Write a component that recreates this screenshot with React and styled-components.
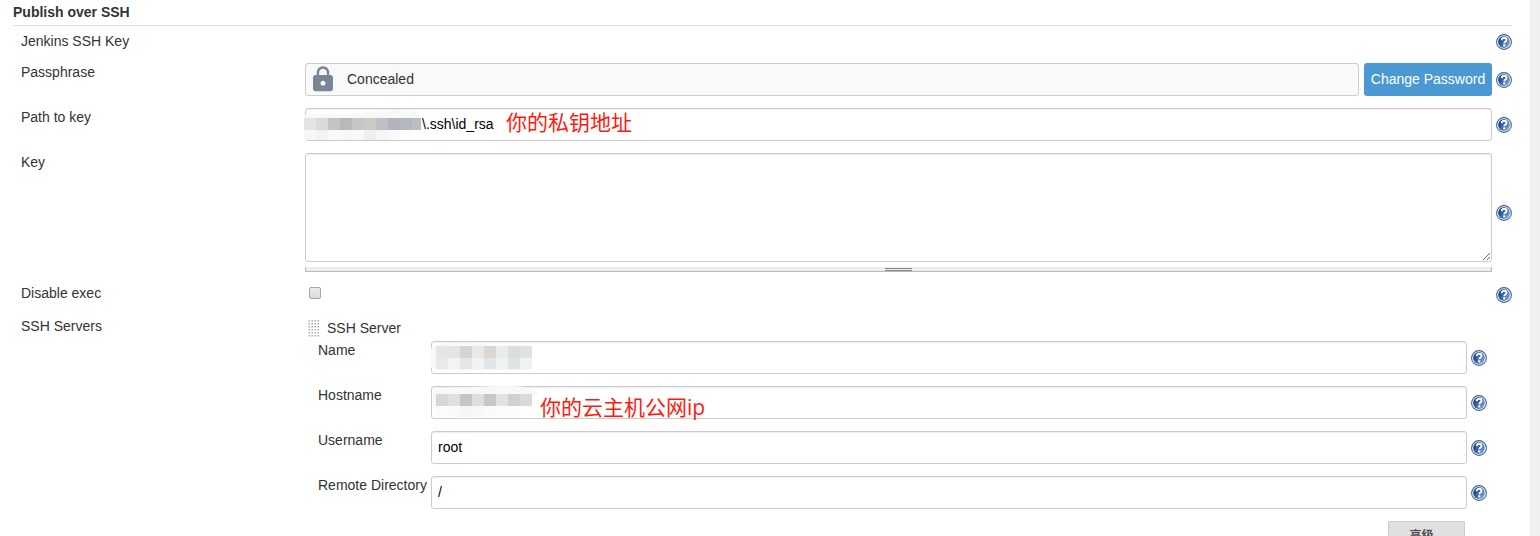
import React, { useState } from 'react'
import styled, { createGlobalStyle } from 'styled-components';

const pathCells = [
  ['#e4e4e4', '#dcdad9', '#c4c4c6', '#b9b9bc', '#c6c5c9', '#cbc9c8', '#bfc0c6', '#b4b3bd', '#b5b9bf', '#b9bfbf'],
  ['#f7f7f7', '#f3f3f3', '#fafafa', '#f8f8f8', '#f9f9f9', '#f0efee', '#f6f6f6', '#fafafa', '#fdfdfd', '#ffffff'],
];
const nameCells = [
  ['#e6e6e7', '#e4e4e5', '#d4d4d5', '#e9e9ea', '#dbd7d5', '#ebebeb', '#dadedf', '#e1e1e4'],
  ['#e9e9ea', '#f3f3f1', '#e6e6e7', '#f2f2f2', '#e3e4e5', '#f0f3f2', '#e0e3e3', '#f1f1f1'],
];
const hostCells = [
  ['#d7d7da', '#e0e0df', '#c8c5c6', '#dededf', '#c8c6c6', '#e2e2e3', '#ccd2d1', '#dadadc'],
  ['#fbfbfb', '#fafafa', '#f6f6f6', '#f8f8f8', '#fafafa', '#fbfbfb', '#fcfcfc', '#fefefe'],
];

function HelpIcon() {
  return (
    <svg width="16" height="16" viewBox="0 0 16 16" aria-hidden="true">
      <defs>
        <linearGradient id="helpFill" x1="0" y1="0.2" x2="1" y2="0.8">
          <stop offset="0.2" stopColor="#1f4a8a" />
          <stop offset="1" stopColor="#83a6d8" />
        </linearGradient>
      </defs>
      <circle cx="8" cy="8" r="7.4" fill="#fff" stroke="#3a62a0" strokeWidth="1.1" />
      <circle cx="8" cy="8" r="5.9" fill="url(#helpFill)" />
      <path d="M5.7 6.2C5.7 4.5 6.7 3.8 8.1 3.8s2.4 .8 2.4 2.1c0 1.6-2.2 1.7-2.2 3.4" fill="none" stroke="#fff" strokeWidth="1.9" />
      <rect x="7.2" y="10.3" width="2.1" height="2.1" fill="#fff" />
    </svg>
  )
}

function LockIcon() {
  return (
    <svg width="30" height="30" viewBox="0 0 24 24" fill="#778595" aria-hidden="true">
      <path d="M18 8h-1V6c0-2.76-2.24-5-5-5S7 3.24 7 6v2H6c-1.1 0-2 .9-2 2v9c0 1.1.9 2 2 2h12c1.1 0 2-.9 2-2v-9c0-1.1-.9-2-2-2zm-6 8.500c-1.1 0-2-.9-2-2s.9-2 2-2 2 .9 2 2-.9 2-2 2zm3.100-8.500H8.900V6c0-1.710 1.390-3.100 3.100-3.100 1.710 0 3.100 1.390 3.100 3.100v2z" />
    </svg>
  )
}

function DragHandle() {
  const dots = [];
  for (let y = 0; y < 6; y++) {
    for (let x = 0; x < 4; x++) {
      dots.push(
        <g key={`${x}-${y}`}>
          <rect x={x * 3} y={y * 3} width="2" height="2" fill="#dcdcdc" />
          <rect x={x * 3 + 1} y={y * 3} width="1" height="1" fill="#a8a8a8" />
        </g>
      );
    }
  }
  return <svg width="11" height="17" aria-hidden="true">{dots}</svg>
}

// blocks that hide a private value
function Mosaic({ cells, width, smudge, left = 5, top }) {
  return (
    <svg width={width} height="32" aria-hidden="true">
      <path d={smudge} fill="#f8f8f8" />
      {cells.map((row, y) => row.map((color, x) => (
        <rect key={`${x}-${y}`} x={left + x * 12} y={top + y * 12} width="12" height={y === 0 ? 12 : 11} fill={color} />
      )))}
    </svg>
  )
}

function Help({ topic }) {
  return (
    <HelpCell>
      <HelpButton type="button" aria-label={`Help for ${topic}`}><HelpIcon /></HelpButton>
    </HelpCell>
  )
}

export default function App() {
  const [path, setPath] = useState('\\.ssh\\id_rsa');
  const [key, setKey] = useState('');
  const [disableExec, setDisableExec] = useState(false);
  const [server, setServer] = useState({ name: '', hostname: '', username: 'root', directory: '/' });

  const changeServer = (e) => {
    setServer({ ...server, [e.target.name]: e.target.value });
  }

  return (
    <>
      <GlobalStyle />
      <Page>
        <SectionTitle>Publish over SSH</SectionTitle>
        <Form onSubmit={(e) => e.preventDefault()}>
          <Row>
            <Label as="span">Jenkins SSH Key</Label>
            <Control />
            <Help topic="Jenkins SSH Key" />
          </Row>

          <Row>
            <Label as="span">Passphrase</Label>
            <PasswordControl>
              <Concealed><LockIcon /><ConcealedText>Concealed</ConcealedText></Concealed>
              <ChangeButton type="button">Change Password</ChangeButton>
            </PasswordControl>
            <Help topic="Passphrase" />
          </Row>

          <Row>
            <Label htmlFor="path">Path to key</Label>
            <Control>
              <Input id="path" $indent={116} value={path} onChange={(e) => setPath(e.target.value)} />
              <Cover $left={-1}>
                <Mosaic cells={pathCells} width={117} left={0} top={10} smudge="M0 7Q36 6 66 4Q91 1 111 4Q117 6 117 12V22Q96 24 72 30H0Z" />
              </Cover>
              <Note $left={201}>你的私钥地址</Note>
            </Control>
            <Help topic="Path to key" />
          </Row>

          <Row>
            <Label htmlFor="key">Key</Label>
            <Control>
              <TextArea id="key" value={key} onChange={(e) => setKey(e.target.value)} />
              <ResizeBar><Grip /></ResizeBar>
            </Control>
            <Help topic="Key" />
          </Row>

          <Row $tall>
            <Label htmlFor="exec">Disable exec</Label>
            <Control>
              <Checkbox id="exec" type="checkbox" checked={disableExec} onChange={(e) => setDisableExec(e.target.checked)} />
            </Control>
            <Help topic="Disable exec" />
          </Row>

          <Row>
            <Label as="span">SSH Servers</Label>
            <Control>
              <ServerTitle><DragHandle />SSH Server</ServerTitle>
              <ServerForm>
                <ServerRow>
                  <ServerLabel htmlFor="name">Name</ServerLabel>
                  <Control>
                    <Input id="name" name="name" value={server.name} onChange={changeServer} />
                    <Cover>
                      <Mosaic cells={nameCells} width={101} top={5} smudge="M4 4Q30 0 60 4H97Q101 5 101 9V26Q99 29 94 29H50Q20 31 0 27V9Q1 5 4 4Z" />
                    </Cover>
                  </Control>
                  <Help topic="Name" />
                </ServerRow>
                <ServerRow>
                  <ServerLabel htmlFor="hostname">Hostname</ServerLabel>
                  <Control>
                    <Input id="hostname" name="hostname" value={server.hostname} onChange={changeServer} />
                    <Cover>
                      <Mosaic cells={hostCells} width={108} top={8} smudge="M2 4Q40 0 80 0Q100 0 108 7L101 10V24Q60 24 30 26L2 24Z" />
                    </Cover>
                    <Note $left={109} $low>你的云主机公网ip</Note>
                  </Control>
                  <Help topic="Hostname" />
                </ServerRow>
                <ServerRow>
                  <ServerLabel htmlFor="username">Username</ServerLabel>
                  <Control>
                    <Input id="username" name="username" value={server.username} onChange={changeServer} />
                  </Control>
                  <Help topic="Username" />
                </ServerRow>
                <ServerRow>
                  <ServerLabel htmlFor="directory">Remote Directory</ServerLabel>
                  <Control>
                    <Input id="directory" name="directory" value={server.directory} onChange={changeServer} />
                  </Control>
                  <Help topic="Remote Directory" />
                </ServerRow>
                <AdvancedButton type="button">高级...</AdvancedButton>
              </ServerForm>
            </Control>
          </Row>
        </Form>
      </Page>
    </>
  )
}

const GlobalStyle = createGlobalStyle`
  * {
    box-sizing: border-box;
  }
  html {
    scrollbar-width: none;
  }
  body {
    margin: 0;
    background: #fff;
    color: #333;
    font: 14px/18px "Liberation Sans", Arial, "Noto Sans CJK SC", sans-serif;
  }
  button, input, textarea {
    font: inherit;
  }
`;

const Page = styled.main`
  min-height: 100vh;
  padding: 3px 18px 0 13px;
  border-right: 10px solid #f0f0f0;
`;

const SectionTitle = styled.h1`
  margin: 0 0 6px;
  padding-bottom: 4px;
  border-bottom: 1px solid #ddd;
  font-size: 14px;
  line-height: 18px;
`;

const Form = styled.form`
  display: flex;
  flex-direction: column;
  gap: 12px;
`;

const Row = styled.div`
  display: grid;
  grid-template-columns: 292px 1fr 20px;
  min-height: ${(props) => (props.$tall ? '21px' : '19px')};
`;

const Label = styled.label`
  padding-left: 8px;
`;

const Control = styled.div`
  position: relative;
  min-width: 0;
`;

const PasswordControl = styled(Control)`
  display: flex;
  gap: 5px;
`;

const HelpCell = styled.div`
  display: flex;
  align-items: center;
  justify-content: flex-end;
  padding-top: 1px;
`;

const HelpButton = styled.button`
  display: flex;
  padding: 0;
  border: 0;
  background: none;
  cursor: pointer;
`;

const Input = styled.input`
  display: block;
  width: 100%;
  height: 33px;
  padding: 5px 6px 7px;
  padding-left: ${(props) => props.$indent || 6}px;
  border: 1px solid #ccc;
  border-radius: 3px;
  background: #fff;
  color: #000;
  box-shadow: inset 0 1px 1px rgba(0, 0, 0, 0.075);
`;

const TextArea = styled.textarea`
  display: block;
  width: 100%;
  height: 109px;
  padding: 6px;
  border: 1px solid #ccc;
  border-radius: 3px;
  box-shadow: inset 0 1px 1px rgba(0, 0, 0, 0.075);
  resize: vertical;
`;

const ResizeBar = styled.div`
  display: flex;
  justify-content: center;
  height: 5px;
  margin-top: 5px;
  padding-top: 1px;
  border: 1px solid #bbb;
  border-top: 0;
  background: #eee;
  cursor: s-resize;
`;

const Grip = styled.div`
  width: 27px;
  height: 3px;
  border: 1px solid #888;
  border-width: 1px 0;
`;

const Concealed = styled.div`
  display: flex;
  flex: 1;
  align-items: center;
  gap: 9px;
  height: 33px;
  padding-left: 2px;
  border: 1px solid #ccc;
  border-radius: 3px;
  background: #f9f9f9;
`;

const ConcealedText = styled.span`
  padding-bottom: 2px;
`;

const ChangeButton = styled.button`
  width: 128px;
  padding: 0 0 2px;
  border: 0;
  border-radius: 3px;
  background: #4b99d3;
  color: #fff;
  white-space: nowrap;
  cursor: pointer;
`;

const Checkbox = styled.input`
  appearance: none;
  display: block;
  width: 12px;
  height: 12px;
  margin: 3px 4px;
  border: 1px solid #a5a5a5;
  border-radius: 2px;
  background: linear-gradient(#ececec, #dadada);
  &:checked{
    background: #4b99d3;
  }
`;

const ServerTitle = styled.div`
  display: flex;
  align-items: center;
  gap: 8px;
  height: 24px;
  padding: 0 0 2px 3px;
`;

const ServerForm = styled.div`
  display: flex;
  flex-direction: column;
  gap: 12px;
  padding: 0 5px 0 13px;
`;

const ServerRow = styled.div`
  display: grid;
  grid-template-columns: 113px 1fr 20px;
`;

const ServerLabel = styled.label`
  white-space: nowrap;
`;

const AdvancedButton = styled.button`
  align-self: flex-end;
  width: 77px;
  height: 30px;
  margin-right: 22px;
  padding: 0;
  border: 1px solid #ccc;
  border-radius: 1px;
  background: #e0e0e0;
  color: #4d4d4d;
  font-size: 12px;
  font-weight: bold;
`;

const Cover = styled.div`
  position: absolute;
  top: 0;
  left: ${(props) => props.$left || 0}px;
  pointer-events: none;
`;

const Note = styled.span`
  position: absolute;
  top: ${(props) => (props.$low ? 6 : -1)}px;
  left: ${(props) => props.$left}px;
  color: #ff1a0f;
  font-family: "Open Sans", "Noto Sans CJK SC", sans-serif;
  font-size: 21px;
  line-height: 30px;
  white-space: nowrap;
  pointer-events: none;
`;
